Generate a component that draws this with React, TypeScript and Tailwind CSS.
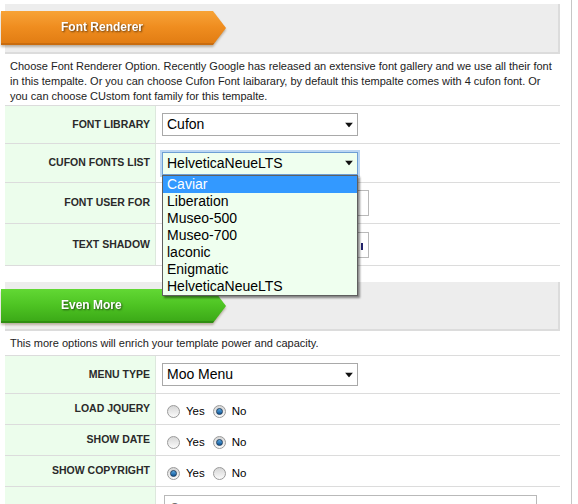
import type { ReactNode } from "react";

const fonts = ["Caviar", "Liberation", "Museo-500", "Museo-700", "laconic", "Enigmatic", "HelveticaNeueLTS"];

function Tab({ label, tone }: { label: string; tone: "orange" | "green" }) {
  const fill =
    tone === "orange"
      ? "from-[#f7a336] via-[#ef8d1f] to-[#e27d13] border-[#c96c0e]"
      : "from-[#62d834] via-[#4ec423] to-[#3caa18] border-[#2f8e12]";
  return (
    <div className="-ml-[4px] w-[225px] drop-shadow-[0_2px_1px_rgba(90,60,20,0.35)]">
      <div
        className={`flex h-[34px] items-center border-b-2 bg-linear-to-b pl-[60px] text-[12px] font-bold text-white [clip-path:polygon(0_0,calc(100%_-_13px)_0,100%_50%,calc(100%_-_13px)_100%,0_100%)] [text-shadow:1px_1px_2px_rgba(0,0,0,0.6)] ${fill}`}
      >
        {label}
      </div>
    </div>
  );
}

function Header({ label, tone, h }: { label: string; tone: "orange" | "green"; h: string }) {
  return (
    <div className={`border-r-2 border-b-2 border-[#dcdcdc] bg-[#ededed] pt-[7px] ${h}`}>
      <Tab label={label} tone={tone} />
    </div>
  );
}

function Row({ label, h, children }: { label: string; h: string; children: ReactNode }) {
  return (
    <div className={`flex border-b border-[#dcdcdc] ${h}`}>
      <div className="flex w-[151px] items-center justify-end border-r border-[#dde8dd] bg-[#ecfdec] pr-[5px] text-[10.5px] font-bold text-[#2a2a2a]">
        {label}
      </div>
      <div className="flex flex-1 items-center pl-[6px]">{children}</div>
    </div>
  );
}

function Caret() {
  return (
    <svg width="8" height="5" viewBox="0 0 8 5" className="absolute right-[4px] top-1/2 -translate-y-1/2">
      <path d="M0 0h8L4 5z" fill="#111" />
    </svg>
  );
}

function Select({ value, focused }: { value: string; focused?: boolean }) {
  return (
    <div
      className={`relative flex h-[23px] w-[196px] items-center border pl-[4px] text-[14px] text-black ${
        focused ? "border-[#6d9fd4] bg-[#efffef] shadow-[0_0_0_2px_#bcd7f3]" : "border-[#a9a9a9] bg-white"
      }`}
    >
      {value}
      <Caret />
    </div>
  );
}

function Radio({ checked }: { checked?: boolean }) {
  return (
    <span className="flex h-[13px] w-[13px] items-center justify-center rounded-full border border-[#9a9a9a] bg-linear-to-b from-[#d6d6d6] to-[#fbfbfb]">
      {checked && <span className="h-[7px] w-[7px] rounded-full border border-[#1e3d5e] bg-linear-to-b from-[#5aa9e2] to-[#0c5698]" />}
    </span>
  );
}

function YesNo({ yes }: { yes?: boolean }) {
  return (
    <div className="ml-[5px] mt-[4px] flex items-center text-[11.5px] text-black">
      <Radio checked={yes} />
      <span className="ml-[6px] mr-[8px] mt-[2px]">Yes</span>
      <Radio checked={!yes} />
      <span className="ml-[6px] mt-[2px]">No</span>
    </div>
  );
}

function TextBox({ caret }: { caret?: boolean }) {
  return (
    <div className="relative h-[26px] w-[207px] border border-[#b9b9b9] bg-white">
      {caret && <span className="absolute left-[198px] top-[10px] h-[7px] w-[2px] bg-[#23236b]" />}
    </div>
  );
}

export default function App() {
  return (
    <div className="min-h-[504px] w-[572px] border-r border-[#c6c6c6] bg-white font-['Liberation_Sans',Arial,sans-serif]">
      <div className="ml-[5px] w-[555px] pt-[4px]">
        <Header label="Font Renderer" tone="orange" h="h-[50px]" />
        <div className="h-[52px] border-b border-[#dcdcdc] px-[5px] pt-[5px] text-[11px] leading-[15px] text-[#222]">
          Choose Font Renderer Option. Recently Google has released an extensive font gallery and we use all their font
          <br />
          in this tempalte. Or you can choose Cufon Font laibarary, by default this tempalte comes with 4 cufon font. Or
          <br />
          you can choose CUstom font family for this tempalte.
        </div>
        <Row label="FONT LIBRARY" h="h-[38px]">
          <Select value="Cufon" />
        </Row>
        <Row label="CUFON FONTS LIST" h="h-[39px]">
          <div className="relative z-10">
            <Select value="HelveticaNeueLTS" focused />
            <ul className="absolute left-0 top-[23px] w-[196px] border border-[#5f5f5f] bg-[#efffef] text-[14px] leading-[17px] text-black shadow-[2px_2px_2px_rgba(0,0,0,0.45)]">
              {fonts.map((font, i) => (
                <li key={font} className={`pl-[4px] ${i === 0 ? "bg-[#3399ff] text-white" : ""}`}>
                  {font}
                </li>
              ))}
            </ul>
          </div>
        </Row>
        <Row label="FONT USER FOR" h="h-[41px]">
          <TextBox />
        </Row>
        <Row label="TEXT SHADOW" h="h-[42px]">
          <TextBox caret />
        </Row>

        <div className="mt-[16px]">
          <Header label="Even More" tone="green" h="h-[49px]" />
        </div>
        <div className="h-[25px] border-b border-[#dcdcdc] px-[5px] pt-[5px] text-[11px] leading-[15px] text-[#222]">
          This more options will enrich your template power and capacity.
        </div>
        <Row label="MENU TYPE" h="h-[38px]">
          <Select value="Moo Menu" />
        </Row>
        <Row label="LOAD JQUERY" h="h-[31px]">
          <YesNo />
        </Row>
        <Row label="SHOW DATE" h="h-[31px]">
          <YesNo />
        </Row>
        <Row label="SHOW COPYRIGHT" h="h-[31px]">
          <YesNo yes />
        </Row>
        <div className="flex h-[70px] border-b border-[#dcdcdc]">
          <div className="w-[151px] border-r border-[#dde8dd] bg-[#ecfdec]" />
          <div className="pl-[8px] pt-[8px]">
            <div className="h-[50px] w-[373px] border border-[#b9b9b9] px-[5px] pt-[3px] text-[13px] text-black">
              © Copyright 2010-2011 - Designed by Joomlart
            </div>
          </div>
        </div>
      </div>
    </div>
  );
}
